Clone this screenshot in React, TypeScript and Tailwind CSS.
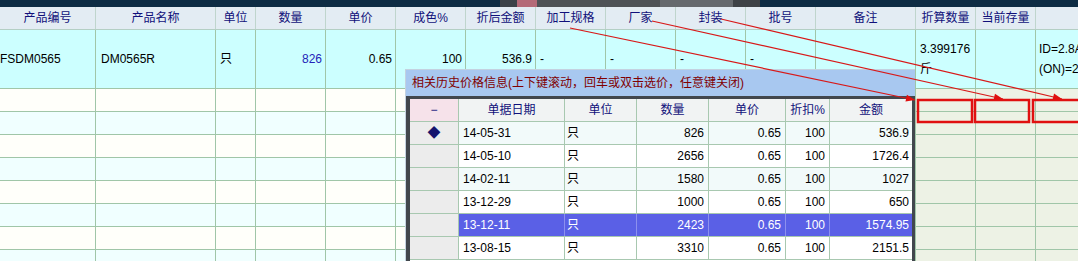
import React from 'react';

const cols = [
  { w: 'w-[96px]', h: '产品编号' },
  { w: 'w-[120px]', h: '产品名称' },
  { w: 'w-[40px]', h: '单位' },
  { w: 'w-[70px]', h: '数量' },
  { w: 'w-[70px]', h: '单价' },
  { w: 'w-[70px]', h: '成色%' },
  { w: 'w-[70px]', h: '折后金额' },
  { w: 'w-[70px]', h: '加工规格' },
  { w: 'w-[70px]', h: '厂家' },
  { w: 'w-[70px]', h: '封装' },
  { w: 'w-[70px]', h: '批号' },
  { w: 'w-[100px]', h: '备注' },
  { w: 'w-[60px]', h: '折算数量' },
  { w: 'w-[60px]', h: '当前存量' },
  { w: 'w-[100px]', h: '' },
];

const popCols = [
  { w: 'w-[49px]', h: '−' },
  { w: 'w-[106px]', h: '单据日期' },
  { w: 'w-[72px]', h: '单位' },
  { w: 'w-[72px]', h: '数量' },
  { w: 'w-[77px]', h: '单价' },
  { w: 'w-[44px]', h: '折扣%' },
  { w: 'w-[82px]', h: '金额' },
];

const history = [
  { date: '14-05-31', qty: '826', price: '0.65', disc: '100', amt: '536.9', mark: true },
  { date: '14-05-10', qty: '2656', price: '0.65', disc: '100', amt: '1726.4' },
  { date: '14-02-11', qty: '1580', price: '0.65', disc: '100', amt: '1027' },
  { date: '13-12-29', qty: '1000', price: '0.65', disc: '100', amt: '650' },
  { date: '13-12-11', qty: '2423', price: '0.65', disc: '100', amt: '1574.95', sel: true },
  { date: '13-08-15', qty: '3310', price: '0.65', disc: '100', amt: '2151.5' },
];

// arrows from the header captions down to the red boxes
const arrows = [
  { x1: 570, y1: 28, x2: 915, y2: 100 },
  { x1: 652, y1: 21, x2: 1003, y2: 99 },
  { x1: 721, y1: 19, x2: 1062, y2: 99 },
];

function head(a: { x1: number; y1: number; x2: number; y2: number }) {
  const dx = a.x2 - a.x1;
  const dy = a.y2 - a.y1;
  const len = Math.hypot(dx, dy);
  const ux = dx / len;
  const uy = dy / len;
  const bx = a.x2 - ux * 9;
  const by = a.y2 - uy * 9;
  const px = -uy * 3.5;
  const py = ux * 3.5;
  return `${a.x2},${a.y2} ${bx + px},${by + py} ${bx - px},${by - py}`;
}

function Row1Cell({ i }: { i: number }) {
  const base = `${cols[i].w} shrink-0 h-full border-r border-[#a0c6a8] flex items-center overflow-hidden whitespace-nowrap`;
  if (i === 0) return <div className={`${base} pl-0`}>FSDM0565</div>;
  if (i === 1) return <div className={`${base} pl-[5px]`}>DM0565R</div>;
  if (i === 2) return <div className={`${base} pl-[4px]`}>只</div>;
  if (i === 3) return <div className={`${base} justify-end pr-[3px] text-[#2424b8]`}>826</div>;
  if (i === 4) return <div className={`${base} justify-end pr-[3px]`}>0.65</div>;
  if (i === 5) return <div className={`${base} justify-end pr-[3px]`}>100</div>;
  if (i === 6) return <div className={`${base} justify-end pr-[3px]`}>536.9</div>;
  if (i >= 7 && i <= 10) return <div className={`${base} pl-[4px]`}>-</div>;
  if (i === 12)
    return (
      <div className={`${base} pl-[4px]`}>
        <div className="leading-[20px]">
          <div>3.399176</div>
          <div>斤</div>
        </div>
      </div>
    );
  if (i === 14)
    return (
      <div className={`${base} pl-[3px]`}>
        <div className="leading-[20px]">
          <div>ID=2.8A</div>
          <div>(ON)=2Ω</div>
        </div>
      </div>
    );
  return <div className={base} />;
}

export default function App() {
  const emptyRows = Array.from({ length: 8 }, (_, r) => r);

  return (
    <div className="relative w-[1078px] h-[261px] overflow-hidden bg-white text-[12px] text-black font-['Liberation_Sans','Noto_Sans_CJK_SC',sans-serif]">
      {/* toolbar strip cut off at the top */}
      <div className="flex h-[7px]">
        <div className="w-[500px] bg-[#0d2c44]" />
        <div className="w-[17px] bg-[#3c4248]" />
        <div className="w-[20px] bg-[#b46a78]" />
        <div className="w-[123px] bg-[#4e5256]" />
        <div className="w-[73px] bg-[#666a6e]" />
        <div className="w-[27px] bg-[#3e4246]" />
        <div className="flex-1 bg-[#0d2c44]" />
      </div>

      {/* header */}
      <div className="flex h-[23px] bg-[#e3ecf3] border-b border-[#b4cfc4] text-[#10107a]">
        {cols.map((c, i) => (
          <div
            key={i}
            className={`${c.w} shrink-0 h-full border-r border-[#bfd5cd] flex items-center justify-center whitespace-nowrap`}
          >
            {c.h}
          </div>
        ))}
      </div>

      {/* current row */}
      <div className="flex h-[59px] bg-[#ccffff] border-b border-[#a0c6a8]">
        {cols.map((_, i) => (
          <Row1Cell key={i} i={i} />
        ))}
      </div>

      {/* empty rows */}
      {emptyRows.map((r) => (
        <div key={r} className="flex h-[23px] border-b border-[#a0c6a8]">
          {cols.map((c, i) => (
            <div
              key={i}
              className={`${c.w} shrink-0 h-full border-r border-[#a0c6a8] ${
                i >= 12 ? 'bg-[#edf2e5]' : r % 2 === 0 ? 'bg-[#fffffa]' : 'bg-[#f0ffff]'
              }`}
            />
          ))}
        </div>
      ))}

      {/* history price popup */}
      <div className="absolute left-[405px] top-[69px] w-[510px] h-[200px] border-l border-t border-[#c4d2e0] bg-white">
        <div className="h-[26px] bg-[#a8c8f0] flex items-center pl-[6px] text-[#800000] whitespace-nowrap">
          相关历史价格信息(上下键滚动，回车或双击选价，任意键关闭)
        </div>
        <div className="h-full border-l-[4px] border-t-[3px] border-r-[3px] border-[#42474d]">
          <div className="flex h-[23px] border-b border-[#a8c8b0] text-[#10107a]">
            {popCols.map((c, i) => (
              <div
                key={i}
                className={`${c.w} shrink-0 h-full flex items-center justify-center ${
                  i < 6 ? 'border-r border-[#a8c8b0]' : ''
                } ${i === 0 ? 'bg-[#f6e2ea]' : 'bg-[#f1f3f3]'}`}
              >
                {c.h}
              </div>
            ))}
          </div>
          {history.map((h, r) => {
            const rowBg = h.sel ? 'bg-[#5a60e6] text-white' : r % 2 === 0 ? 'bg-[#f2fafa]' : 'bg-white';
            const line = h.sel ? 'border-[#8c90ee]' : 'border-[#a8c8b0]';
            return (
              <div key={r} className="flex h-[23px] border-b border-[#a8c8b0]">
                <div className="w-[49px] shrink-0 h-full bg-[#ececec] border-r border-[#a8c8b0] flex items-center justify-center text-[#14146e] text-[13px]">
                  {h.mark ? '◆' : ''}
                </div>
                <div className={`w-[106px] shrink-0 h-full border-r ${line} ${rowBg} flex items-center pl-[4px]`}>{h.date}</div>
                <div className={`w-[72px] shrink-0 h-full border-r ${line} ${rowBg} flex items-center pl-[2px]`}>只</div>
                <div className={`w-[72px] shrink-0 h-full border-r ${line} ${rowBg} flex items-center justify-end pr-[4px]`}>{h.qty}</div>
                <div className={`w-[77px] shrink-0 h-full border-r ${line} ${rowBg} flex items-center justify-end pr-[4px]`}>{h.price}</div>
                <div className={`w-[44px] shrink-0 h-full border-r ${line} ${rowBg} flex items-center justify-end pr-[4px]`}>{h.disc}</div>
                <div className={`w-[82px] shrink-0 h-full ${rowBg} flex items-center justify-end pr-[3px]`}>{h.amt}</div>
              </div>
            );
          })}
        </div>
      </div>

      {/* red annotation overlay */}
      <svg className="absolute left-0 top-0 pointer-events-none" width="1078" height="261" viewBox="0 0 1078 261">
        {arrows.map((a, i) => (
          <g key={i}>
            <line x1={a.x1} y1={a.y1} x2={a.x2} y2={a.y2} stroke="#d81818" strokeWidth="1.2" />
            <polygon points={head(a)} fill="#e01010" />
          </g>
        ))}
        <rect x="918" y="100" width="54" height="22" fill="none" stroke="#e01010" strokeWidth="2.5" />
        <rect x="975" y="100" width="54" height="22" fill="none" stroke="#e01010" strokeWidth="2.5" />
        <rect x="1033" y="100" width="60" height="22" fill="none" stroke="#e01010" strokeWidth="2.5" />
      </svg>
    </div>
  );
}
